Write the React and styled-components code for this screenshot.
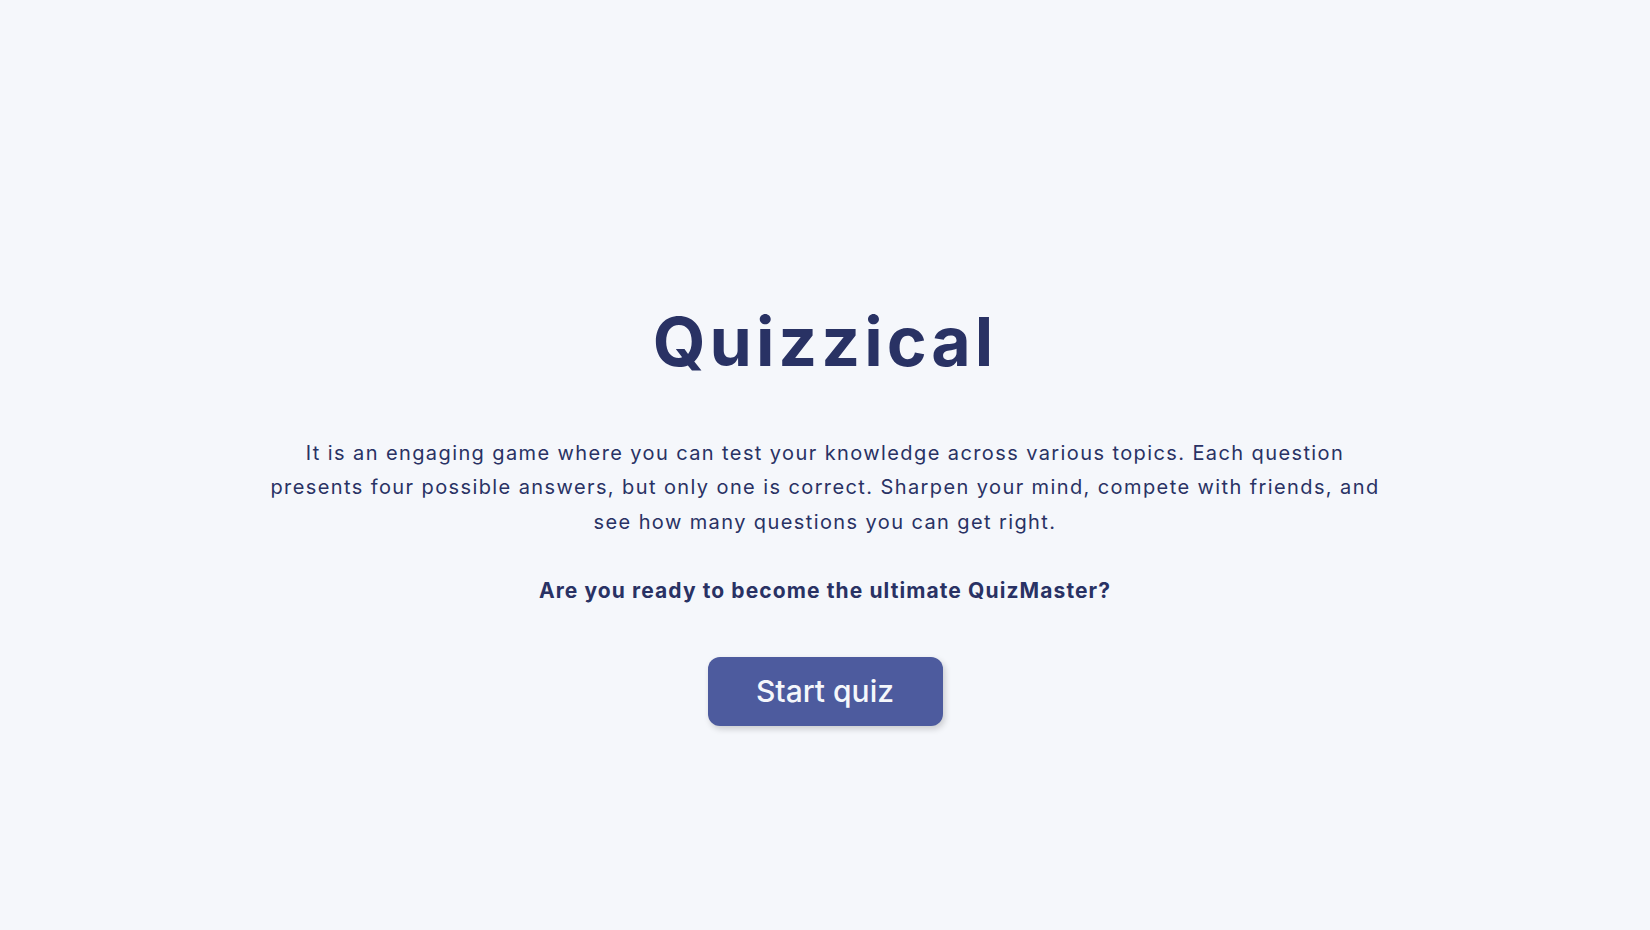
import React from "react";
import styled, { createGlobalStyle } from "styled-components";

const GlobalStyle = createGlobalStyle`
  * {
    box-sizing: border-box;
  }
  body {
    margin: 0;
    background: #f5f7fb;
    font-family: Inter, "Liberation Sans", sans-serif;
    color: #293264;
  }
`;

const Page = styled.main`
  min-height: 100vh;
  display: flex;
  flex-direction: column;
  align-items: center;
  padding-top: 301px;
  text-align: center;
`;

const Title = styled.h1`
  margin: 0;
  font-size: 68px;
  font-weight: 700;
  letter-spacing: 4px;
  line-height: 1.2;
`;

const Intro = styled.p`
  margin: 53px 0 0;
  max-width: 1125px;
  font-size: 20px;
  line-height: 34.7px;
  font-weight: 400;
  letter-spacing: 1.4px;
`;

const Question = styled.p`
  margin: 38px 0 0;
  font-size: 21px;
  font-weight: 700;
  letter-spacing: 1.1px;
`;

const StartButton = styled.button`
  margin-top: 54px;
  width: 235px;
  height: 69px;
  border: none;
  border-radius: 12px;
  background: #4d5b9e;
  color: #f5f7fb;
  font-family: Inter, "Liberation Sans", sans-serif;
  font-size: 30px;
  font-weight: 500;
  box-shadow: 2px 3px 6px rgba(0, 0, 0, 0.18);
  cursor: pointer;
`;

const App = () => {
  return (
    <>
      <GlobalStyle />
      <Page>
        <Title>Quizzical</Title>
        <Intro>
          It is an engaging game where you can test your knowledge across
          various topics. Each question presents four possible answers, but
          only one is correct. Sharpen your mind, compete with friends, and see
          how many questions you can get right.
        </Intro>
        <Question>Are you ready to become the ultimate QuizMaster?</Question>
        <StartButton>Start quiz</StartButton>
      </Page>
    </>
  );
};

export default App;
